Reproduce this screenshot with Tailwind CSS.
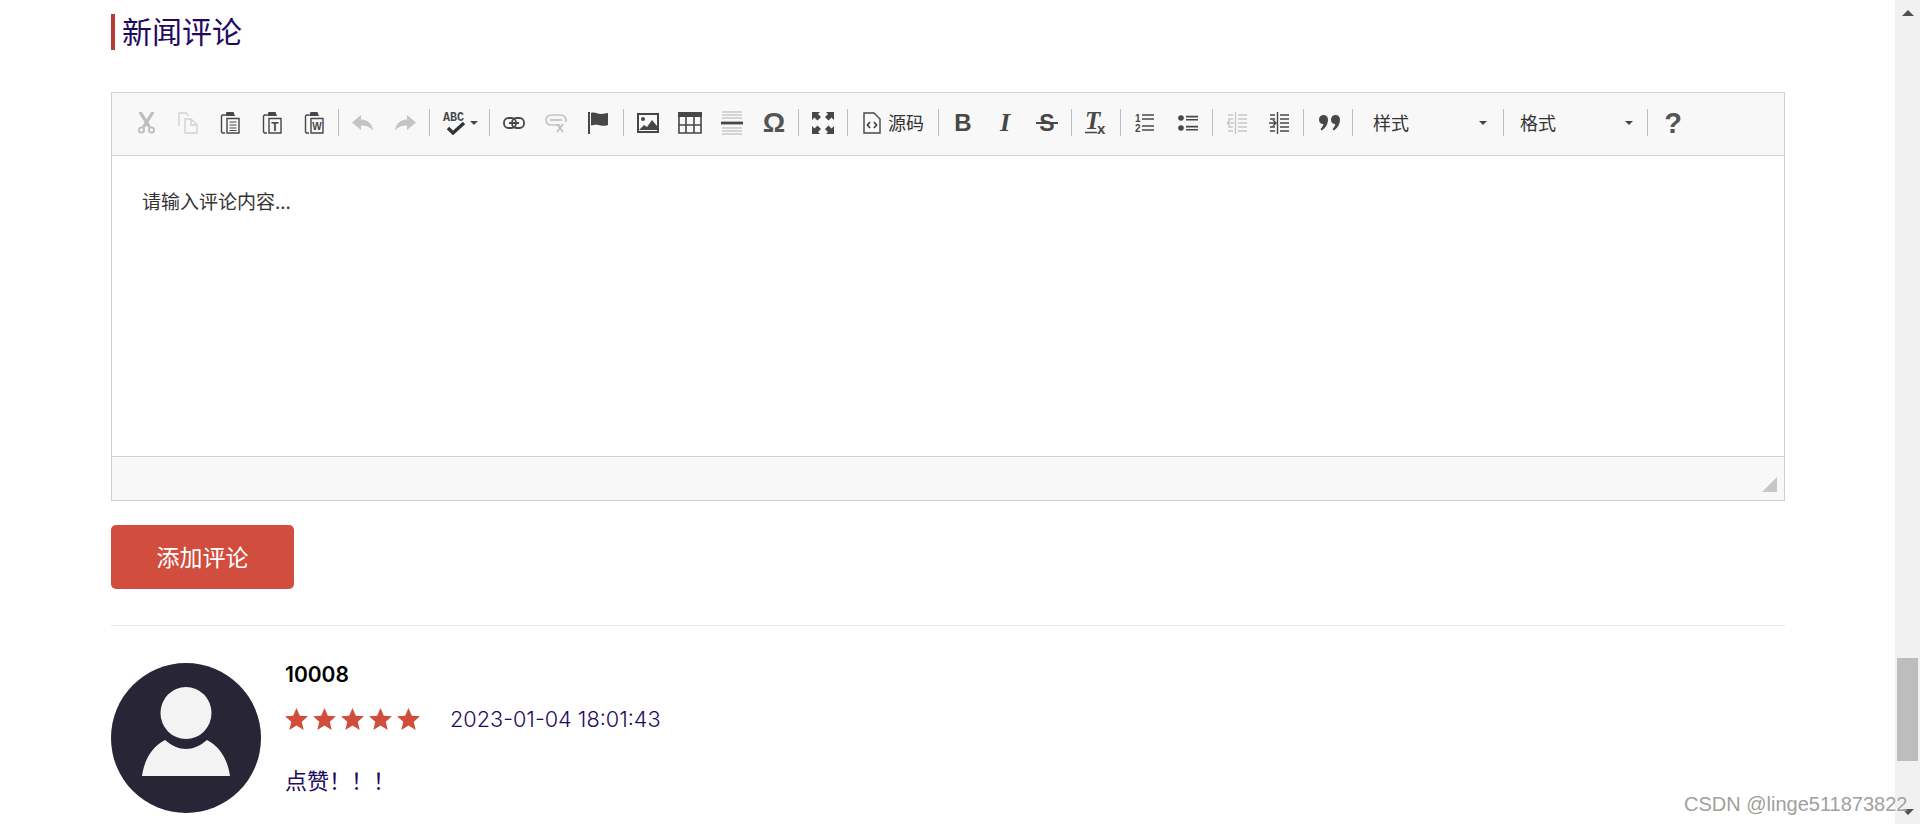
<!DOCTYPE html>
<html lang="zh">
<head>
    <meta charset="UTF-8">
    <title>新闻评论</title>
    <script src="https://cdn.jsdelivr.net/npm/@tailwindcss/browser@4"></script>
</head>
<body class="bg-white overflow-hidden font-['Inter','Noto_Sans_CJK_SC',sans-serif]">
<div class="relative flex h-[824px] w-[1920px] overflow-hidden">
    <main class="w-[1895px] pl-[111px] pr-[110px]">
        <h2 class="mt-[14px] h-[36px] border-l-4 border-[#bd3a31] pl-[7px] text-[30px] leading-[32px] text-[#1f0a5e] font-['Noto_Sans_CJK_SC',sans-serif]">新闻评论</h2>

        <!-- editor -->
        <div class="mt-[42px] border border-[#d1d1d1] h-[409px] flex flex-col">
            <div class="h-[63px] shrink-0 bg-[#f8f8f8] border-b border-[#d1d1d1] pl-[13px] pb-[3px] flex items-center text-[#474747]">
                <span class="w-[42px] flex justify-center"><svg width="21" height="22" viewBox="0 0 21 22" fill="none" stroke="#bdbdbd"><path d="M4 0l9.500 15M17 0L7.500 15" stroke-width="3.200"/><circle cx="5.500" cy="18" r="2.600" stroke-width="1.800"/><circle cx="15.500" cy="18" r="2.600" stroke-width="1.800"/></svg></span>
                <span class="w-[42px] flex justify-center"><svg width="21" height="22" viewBox="0 0 21 22" fill="none" stroke="#d2d2d2" stroke-width="1.400"><path d="M1 14V1h7l3 3"/><path d="M7 7h6l6 6v8H7z"/><path d="M13 7v6h6"/></svg></span>
                <span class="w-[42px] flex justify-center"><svg width="21" height="22" viewBox="0 0 21 22" fill="none" stroke="#474747" stroke-width="1.400"><path d="M5 3H2.500L1.500 4v16l1 1H5"/><path d="M7 0.800h6l1 2.500H6z" fill="#474747"/><path d="M7 6.500h12v14.500H7z"/><path d="M9.500 10h7M9.500 13h7M9.500 16h7M9.500 18.500h7" stroke-width="1.200"/></svg></span>
                <span class="w-[42px] flex justify-center"><svg width="21" height="22" viewBox="0 0 21 22" fill="none" stroke="#474747" stroke-width="1.400"><path d="M5 3H2.500L1.500 4v16l1 1H5"/><path d="M7 0.800h6l1 2.500H6z" fill="#474747"/><path d="M7 6.500h12v14.500H7z"/><text x="13" y="18.500" text-anchor="middle" font-size="12" font-weight="700" fill="#474747" stroke="none" font-family="Liberation Sans">T</text></svg></span>
                <span class="w-[42px] flex justify-center"><svg width="21" height="22" viewBox="0 0 21 22" fill="none" stroke="#474747" stroke-width="1.400"><path d="M5 3H2.500L1.500 4v16l1 1H5"/><path d="M7 0.800h6l1 2.500H6z" fill="#474747"/><path d="M7 6.500h12v14.500H7z"/><text x="13" y="18" text-anchor="middle" font-size="10" font-weight="700" fill="#474747" stroke="none" font-family="Liberation Sans">W</text></svg></span>
                <span class="w-px h-[27px] bg-[#bcbcbc] mx-[3px]"></span>
                <span class="w-[42px] flex justify-center"><svg width="22" height="16" viewBox="0 0 22 16" fill="#c4c4c4"><path d="M9 0L0 7.500 9 15v-4.500c4.500 0 8.500 1 12 5-1-7-5-10.500-12-11z"/></svg></span>
                <span class="w-[42px] flex justify-center"><svg width="22" height="16" viewBox="0 0 22 16" fill="#c4c4c4"><path d="M13 0l9 7.500-9 7.500v-4.500c-4.500 0-8.500 1-12 5 1-7 5-10.500 12-11z"/></svg></span>
                <span class="w-px h-[27px] bg-[#bcbcbc] mx-[3px]"></span>
                <span class="w-[53px] flex items-center justify-center gap-[3px]"><svg width="25" height="26" viewBox="0 0 25 26"><text x="1" y="11" font-size="13" font-weight="700" fill="#474747" font-family="Liberation Mono" textLength="21" lengthAdjust="spacingAndGlyphs">ABC</text><path d="M6 18l5 5 11-10" fill="none" stroke="#333" stroke-width="3.400"/></svg><span class="border-x-[4px] border-x-transparent border-t-[4px] border-t-[#474747] mt-[1px]"></span></span>
                <span class="w-px h-[27px] bg-[#bcbcbc] mx-[3px]"></span>
                <span class="w-[42px] flex justify-center"><svg width="22" height="14" viewBox="0 0 22 14" fill="none" stroke="#474747" stroke-width="1.800"><rect x="1" y="2" width="12" height="10" rx="4.500"/><rect x="9" y="2" width="12" height="10" rx="4.500"/><path d="M6 7h10" stroke-width="2"/></svg></span>
                <span class="w-[42px] flex justify-center"><svg width="22" height="20" viewBox="0 0 22 20" fill="none" stroke="#c2c2c2" stroke-width="1.700"><path d="M15 12H6a5 5 0 0 1 0-10h10a5 5 0 0 1 4.500 7"/><path d="M5 7h12" stroke-width="1.800"/><path d="M12 11l6 8M18 11l-6 8" stroke-width="2"/></svg></span>
                <span class="w-[43px] flex justify-center"><svg width="21" height="22" viewBox="0 0 21 22" fill="#474747"><path d="M0 0h2v22H0z"/><path d="M3 1c4-1.500 6 1 10 1 3 0 5-1 7-1v12c-3 1-5 1-7 0.500-4-1-6-1-10 0z"/></svg></span>
                <span class="w-px h-[27px] bg-[#bcbcbc] mx-[3px]"></span>
                <span class="w-[42px] flex justify-center"><svg width="22" height="20" viewBox="0 0 22 20" fill="#474747"><path fill-rule="evenodd" d="M0 0h22v20H0zM2 2v16h18V2z"/><circle cx="6" cy="6" r="2"/><path d="M2 17l5-5 3 2 5-7 5 6v4z"/></svg></span>
                <span class="w-[42px] flex justify-center"><svg width="24" height="22" viewBox="0 0 24 22" fill="none" stroke="#474747"><path d="M0 2.500h24" stroke-width="5"/><path d="M1 1v20h22V1M8 5v16M16 5v16M1 13h22M1 21h22" stroke-width="1.600"/></svg></span>
                <span class="w-[42px] flex justify-center"><svg width="22" height="24" viewBox="0 0 22 24" fill="none" stroke="#b0b0b0" stroke-width="1"><path d="M1 1h20M1 4h20M1 7h20M1 17h20M1 20h20M1 23h20"/><path d="M0 12h22" stroke="#474747" stroke-width="2.800"/></svg></span>
                <span class="w-[42px] flex justify-center text-[28px] leading-[32px] font-bold text-[#555] font-['Liberation_Sans',sans-serif]">Ω</span>
                <span class="w-px h-[27px] bg-[#bcbcbc] mx-[3px]"></span>
                <span class="w-[42px] flex justify-center"><svg width="22" height="22" viewBox="0 0 22 22" fill="#474747"><path d="M0 0h8L6 2l3 3-3.500 3.500-3-3L0 8zM22 0h-8l2 2-3 3 3.500 3.500 3-3 2.500 2.500zM0 22h8l-2-2 3-3-3.500-3.500-3 3L0 14zM22 22h-8l2-2-3-3 3.500-3.500 3 3 2.500-2.500z"/></svg></span>
                <span class="w-px h-[27px] bg-[#bcbcbc] mx-[3px]"></span>
                <span class="w-[84px] pl-[12px] flex items-center gap-[8px]"><svg width="18" height="22" viewBox="0 0 18 22" fill="none" stroke="#474747" stroke-width="1.400"><path d="M1 1h10l6 6v14H1z"/><path d="M7 10l-2.500 3L7 16M11 10l2.500 3L11 16" stroke-width="1.800"/></svg><span class="-ml-[1px] mb-[1px] text-[18px] leading-[26px] text-[#333] font-['Noto_Sans_CJK_SC',sans-serif]">源码</span></span>
                <span class="w-px h-[27px] bg-[#bcbcbc] mx-[3px]"></span>
                <span class="w-[42px] text-center text-[24px] leading-[28px] font-bold text-[#474747] font-['Liberation_Sans',sans-serif]">B</span>
                <span class="w-[42px] text-center text-[26px] leading-[28px] font-bold italic text-[#474747] font-['Liberation_Serif',serif]">I</span>
                <span class="w-[42px] flex justify-center"><svg width="22" height="22" viewBox="0 0 22 22"><text x="11" y="19" text-anchor="middle" font-size="23" font-weight="700" fill="#474747" font-family="Liberation Sans">S</text><path d="M0 11h22" stroke="#474747" stroke-width="2"/></svg></span>
                <span class="w-px h-[27px] bg-[#bcbcbc] mx-[3px]"></span>
                <span class="w-[42px] flex justify-center"><svg width="22" height="24" viewBox="0 0 22 24"><text x="0" y="18" font-size="25" font-weight="700" font-style="italic" fill="#474747" font-family="Liberation Serif">T</text><text x="12" y="23" font-size="15" font-weight="700" fill="#474747" font-family="Liberation Sans">x</text><path d="M0 21.500h12" stroke="#474747" stroke-width="1.500"/></svg></span>
                <span class="w-px h-[27px] bg-[#bcbcbc] mx-[3px]"></span>
                <span class="w-[42px] flex justify-center"><svg width="20" height="22" viewBox="0 0 20 22"><text x="0" y="10" font-size="10" font-weight="700" fill="#474747" font-family="Liberation Sans">1</text><text x="0" y="20" font-size="10" font-weight="700" fill="#474747" font-family="Liberation Sans">2</text><path d="M7 3h12M7 7h12M7 14h12M7 18h12" stroke="#474747" stroke-width="1.600"/></svg></span>
                <span class="w-[43px] flex justify-center"><svg width="20" height="20" viewBox="0 0 20 20" fill="#474747"><circle cx="3" cy="5" r="2.800"/><circle cx="3" cy="15" r="2.800"/><path d="M8 2.800h12v1.600H8zM8 6h12v1.600H8zM8 12.800h12v1.600H8zM8 16h12v1.600H8z"/></svg></span>
                <span class="w-px h-[27px] bg-[#bcbcbc] mx-[3px]"></span>
                <span class="w-[42px] flex justify-center"><svg width="20" height="22" viewBox="0 0 20 22" fill="none" stroke="#c8c8c8" stroke-width="1.400"><path d="M8.500 0v22M11 3h9M11 7h9M11 11h9M11 15h9M11 19h9M1 3h5M1 19h5M1 15h5M1 7h5"/><path d="M7 11H0M3 8l-3 3 3 3"/></svg></span>
                <span class="w-[42px] flex justify-center"><svg width="20" height="22" viewBox="0 0 20 22" fill="none" stroke="#474747" stroke-width="1.400"><path d="M8.500 0v22M11 3h9M11 7h9M11 11h9M11 15h9M11 19h9M1 3h5M1 19h5M1 15h5M1 7h5"/><path d="M0 11h7M4 8l3 3-3 3"/></svg></span>
                <span class="w-px h-[27px] bg-[#bcbcbc] mx-[3px]"></span>
                <span class="w-[42px] flex justify-center pl-[3px]"><svg width="22" height="16" viewBox="0 0 22 16" fill="#474747"><path d="M0 4.500a4.500 4.500 0 1 1 9 0c0 5-3 9-6.500 11l-1-1.500c1.500-1.200 2.500-3 2.800-5A4.500 4.500 0 0 1 0 4.500zM12 4.500a4.500 4.500 0 1 1 9 0c0 5-3 9-6.500 11l-1-1.500c1.500-1.200 2.500-3 2.800-5A4.500 4.500 0 0 1 12 4.500z"/></svg></span>
                <span class="w-px h-[27px] bg-[#bcbcbc] mx-[3px]"></span>
                <span class="w-[144px] pl-[17px] pr-[13px] flex items-center justify-between text-[18px] leading-[24px] text-[#333] font-['Noto_Sans_CJK_SC',sans-serif]"><span class="mb-[2px]">样式</span><span class="border-x-[4px] border-x-transparent border-t-[4px] border-t-[#474747]"></span></span>
                <span class="w-px h-[27px] bg-[#bcbcbc] mx-[3px]"></span>
                <span class="w-[137px] pl-[13px] pr-[11px] flex items-center justify-between text-[18px] leading-[24px] text-[#333] font-['Noto_Sans_CJK_SC',sans-serif]"><span class="mb-[2px]">格式</span><span class="border-x-[4px] border-x-transparent border-t-[4px] border-t-[#474747]"></span></span>
                <span class="w-px h-[27px] bg-[#bcbcbc] mx-[3px]"></span>
                <span class="w-[42px] pl-[2px] text-center text-[29px] leading-[32px] font-bold text-[#555] font-['Liberation_Sans',sans-serif]">?</span>
            </div>
            <div class="flex-1 pl-[30px] pt-[32px] text-[19px] leading-[26px] text-[#333] font-['Noto_Sans_CJK_SC',sans-serif]">请输入评论内容...</div>
            <div class="relative h-[44px] shrink-0 bg-[#f8f8f8] border-t border-[#d1d1d1]">
                <span class="absolute right-[7px] bottom-[8px] border-l-[15px] border-l-transparent border-b-[15px] border-b-[#c6c6c6]"></span>
            </div>
        </div>

        <button class="mt-[24px] block w-[183px] h-[64px] pb-[2px] rounded-[5px] bg-[#d14d3d] text-white text-[23px] font-['Noto_Sans_CJK_SC',sans-serif]">添加评论</button>

        <hr class="mt-[36px] border-t border-[#e8e8ee]">

        <!-- comment -->
        <div class="mt-[37px] flex gap-[24px]">
            <div class="w-[150px] h-[150px] rounded-full bg-[#272536] overflow-hidden shrink-0">
                <svg width="150" height="150" viewBox="0 0 150 150" fill="#f3f3f3"><ellipse cx="75" cy="50" rx="25.500" ry="26"/><path d="M31 113c2-14 8-28 23-36 7 6 14 9 21 9s14-3 21-9c15 8 21 22 23 36z"/></svg>
            </div>
            <div class="-mt-[2px]">
                <div class="text-[21px] leading-[28px] font-semibold text-black">10008</div>
                <div class="mt-[16px] flex items-center h-[28px]">
                    <div class="flex gap-[5px] w-[165px]">
                        <svg width="23" height="22" viewBox="0 0 24 23" fill="#d14d3d"><path d="M12 0l3.500 8 8.500.7-6.500 5.600 2 8.700-7.500-4.600L4.500 23l2-8.700L0 8.700 8.500 8z"/></svg>
                        <svg width="23" height="22" viewBox="0 0 24 23" fill="#d14d3d"><path d="M12 0l3.500 8 8.500.7-6.500 5.600 2 8.700-7.500-4.600L4.500 23l2-8.700L0 8.700 8.500 8z"/></svg>
                        <svg width="23" height="22" viewBox="0 0 24 23" fill="#d14d3d"><path d="M12 0l3.500 8 8.500.7-6.500 5.600 2 8.700-7.500-4.600L4.500 23l2-8.700L0 8.700 8.500 8z"/></svg>
                        <svg width="23" height="22" viewBox="0 0 24 23" fill="#d14d3d"><path d="M12 0l3.500 8 8.500.7-6.500 5.600 2 8.700-7.500-4.600L4.500 23l2-8.700L0 8.700 8.500 8z"/></svg>
                        <svg width="23" height="22" viewBox="0 0 24 23" fill="#d14d3d"><path d="M12 0l3.500 8 8.500.7-6.500 5.600 2 8.700-7.500-4.600L4.500 23l2-8.700L0 8.700 8.500 8z"/></svg>
                    </div>
                    <span class="text-[21.7px] font-light text-[#1f0a5e]">2023-01-04 18:01:43</span>
                </div>
                <p class="mt-[32px] text-[22px] leading-[28px] text-[#1f0a5e] font-['Noto_Sans_CJK_SC',sans-serif]">点赞！！！</p>
            </div>
        </div>
    </main>

    <!-- page scrollbar -->
    <aside class="relative w-[25px] h-full bg-[#f1f1f1] shrink-0">
        <span class="absolute left-[7px] top-[10px] border-x-[6px] border-x-transparent border-b-[6px] border-b-[#505050]"></span>
        <div class="absolute left-[2px] top-[658px] w-[21px] h-[103px] bg-[#bdbdbd]"></div>
        <span class="absolute left-[7px] bottom-[9px] border-x-[6px] border-x-transparent border-t-[6px] border-t-[#505050]"></span>
    </aside>

    <div class="absolute left-[1684px] top-[792px] text-[20px] leading-[24px] text-[#a0a0a0] [text-shadow:0_0_2px_#fff] font-['Liberation_Sans',sans-serif]">CSDN @linge511873822</div>
</div>
</body>
</html>
